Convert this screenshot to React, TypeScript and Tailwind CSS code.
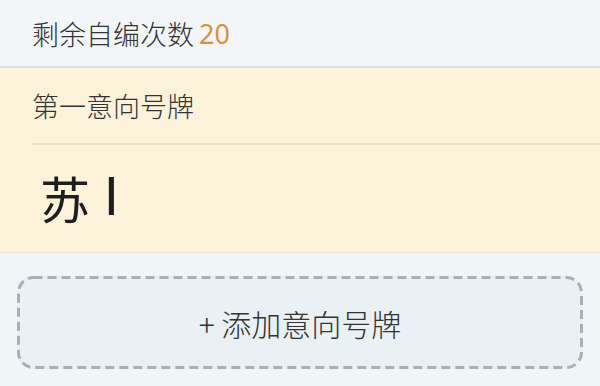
import React from "react";

export default function App() {
  const font = { fontFamily: '"Noto Sans CJK SC", "Noto Sans", sans-serif' };
  return (
    <div className="w-[600px] h-[386px] overflow-hidden bg-[#f0f5f8]" style={font}>
      <div className="h-[68px] bg-[#f2f6f9] flex items-center pl-[32px] border-b-2 border-[#dcdfe1]">
        <span className="text-[27px] leading-none font-light text-[#333]">剩余自编次数</span>
        <span className="text-[27px] leading-none text-[#d8923a] ml-[5px]" style={{ fontFamily: '"Noto Sans", sans-serif' }}>20</span>
      </div>
      <div className="bg-[#fdf3db] h-[185px] border-b border-[#ece6d8]">
        <div className="ml-[32px] h-[77px] flex items-center border-b-2 border-[#ebe2cc]">
          <span className="text-[27px] leading-none font-light text-[#333]">第一意向号牌</span>
        </div>
        <div className="h-[106px] flex items-center pl-[40px] pb-[2px]">
          <span className="text-[50px] leading-none text-[#1e1e1e]">苏</span>
          <span className="text-[54px] leading-none text-[#1e1e1e] ml-[14px]" style={{ fontFamily: 'Roboto, "Liberation Sans", sans-serif' }}>I</span>
        </div>
      </div>
      <div className="px-[17px] pt-[23px]">
        <div className="relative h-[93px] rounded-[16px] bg-[#e9f1f5] flex items-center justify-center">
          <svg className="absolute inset-0 w-full h-full" width="566" height="93">
            <rect x="1.5" y="1.5" width="563" height="90" rx="15" ry="15" fill="none" stroke="#a9afb4" strokeWidth="3" strokeDasharray="9 5" />
          </svg>
          <span className="relative text-[30px] leading-none font-light text-[#333]">+ 添加意向号牌</span>
        </div>
      </div>
    </div>
  );
}
